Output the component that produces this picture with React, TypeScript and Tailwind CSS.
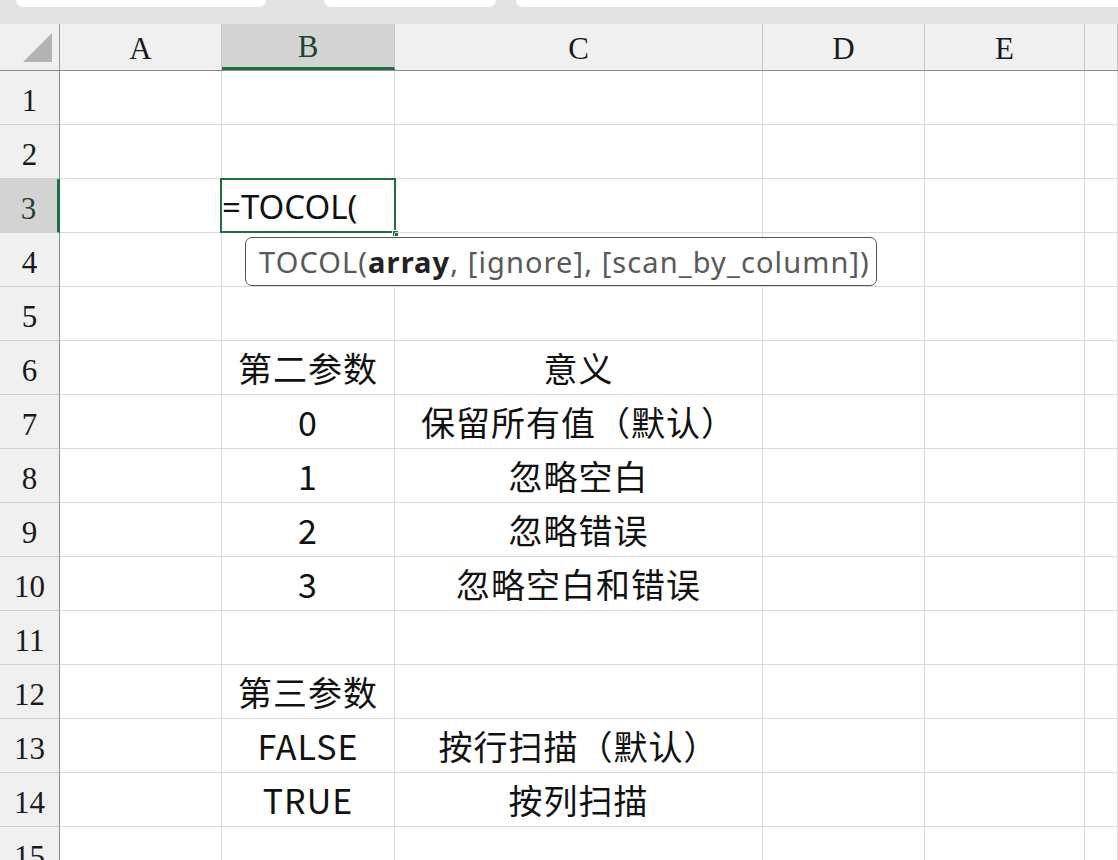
import React from "react";

const COLS = ["A", "B", "C", "D", "E", ""];
const GRID = "grid grid-cols-[60px_162px_173px_368px_162px_160px_1fr]";

// cell values per row, indexed by column (A..F)
const DATA: Record<number, string[]> = {
  6: ["", "第二参数", "意义"],
  7: ["", "0", "保留所有值（默认）"],
  8: ["", "1", "忽略空白"],
  9: ["", "2", "忽略错误"],
  10: ["", "3", "忽略空白和错误"],
  12: ["", "第三参数", ""],
  13: ["", "FALSE", "按行扫描（默认）"],
  14: ["", "TRUE", "按列扫描"],
};

const serif = { fontFamily: '"Liberation Serif", "DejaVu Serif", serif' };
const cjk = { fontFamily: '"Noto Sans CJK SC", "Noto Sans", sans-serif' };

function TopStrip() {
  return (
    <div className="h-[24px] bg-[#e3e3e3] flex items-start">
      <div className="ml-[16px] w-[250px] h-[7px] bg-white rounded-b-[8px]" />
      <div className="ml-[58px] w-[172px] h-[7px] bg-white rounded-b-[8px]" />
      <div className="ml-[20px] flex-1 h-[7px] bg-white rounded-bl-[8px]" />
    </div>
  );
}

function HeaderRow() {
  return (
    <div className={`${GRID} h-[47px] bg-[#f0f0f0] border-b border-[#8c8c8c]`} style={serif}>
      <div className="relative border-r border-[#9a9a9a]">
        <div className="absolute right-[7px] bottom-[8px] w-0 h-0 border-l-[29px] border-l-transparent border-b-[29px] border-b-[#b3b3b3]" />
      </div>
      {COLS.map((c) => (
        <div
          key={c || "F"}
          className={`flex items-center justify-center text-[31px] leading-none pt-[2px] ${
            c === "B"
              ? "bg-[#d3d3d3] text-[#1d4433] border-b-[3px] border-b-[#1e7145] border-r border-r-[#c4c4c4]"
              : "text-[#1a1a1a] border-r border-[#c4c4c4]"
          }`}
        >
          {c}
        </div>
      ))}
    </div>
  );
}

function Row({ n }: { n: number }) {
  const vals = DATA[n] || [];
  const active = n === 3;
  return (
    <div className={`${GRID} h-[54px]`}>
      <div
        className={`flex items-center justify-center text-[31px] leading-none pt-[6px] border-b border-[#cfcfcf] ${
          active
            ? "bg-[#d3d3d3] text-[#1d4433] border-r-[3px] border-r-[#1e7145]"
            : "bg-[#f0f0f0] text-[#1a1a1a] border-r border-r-[#8c8c8c]"
        }`}
        style={serif}
      >
        {n}
      </div>
      {COLS.map((c, i) => (
        <div
          key={c || "F"}
          className="relative flex items-center justify-center border-r border-b border-[#dadada] text-[34px] tracking-[1px] leading-none text-[#111] whitespace-nowrap"
          style={cjk}
        >
          {vals[i] || ""}
          {active && c === "B" && (
            <>
              <div className="absolute -left-[2px] -top-[1px] right-[-2px] bottom-[-1px] border-[2px] border-[#1e7145]" />
              <div
                className="absolute left-0 top-0 bottom-0 flex items-center pt-[2px] text-[33px] tracking-normal text-[#111]"
                style={{ fontFamily: '"Noto Sans", "Open Sans", sans-serif' }}
              >
                =TOCOL(
              </div>
              <div className="absolute right-[-5px] bottom-[-5px] w-[7px] h-[7px] bg-[#1e7145] border border-white" />
            </>
          )}
        </div>
      ))}
    </div>
  );
}

export default function App() {
  const rows = Array.from({ length: 15 }, (_, i) => i + 1);
  return (
    <div className="w-[1118px] h-[860px] overflow-hidden bg-white relative">
      <TopStrip />
      <HeaderRow />
      {rows.map((n) => (
        <Row key={n} n={n} />
      ))}
      {/* function argument tooltip */}
      <div
        className="absolute left-[245px] top-[237px] w-[632px] h-[49px] bg-white border-[1.5px] border-[#555] rounded-[7px] flex items-center pl-[13px] text-[29px] tracking-[1.1px] text-[#595959] whitespace-nowrap"
        style={{ fontFamily: '"Noto Sans", "Open Sans", sans-serif' }}
      >
        TOCOL(<span className="font-bold text-[#222]">array</span>, [ignore], [scan_by_column])
      </div>
    </div>
  );
}
